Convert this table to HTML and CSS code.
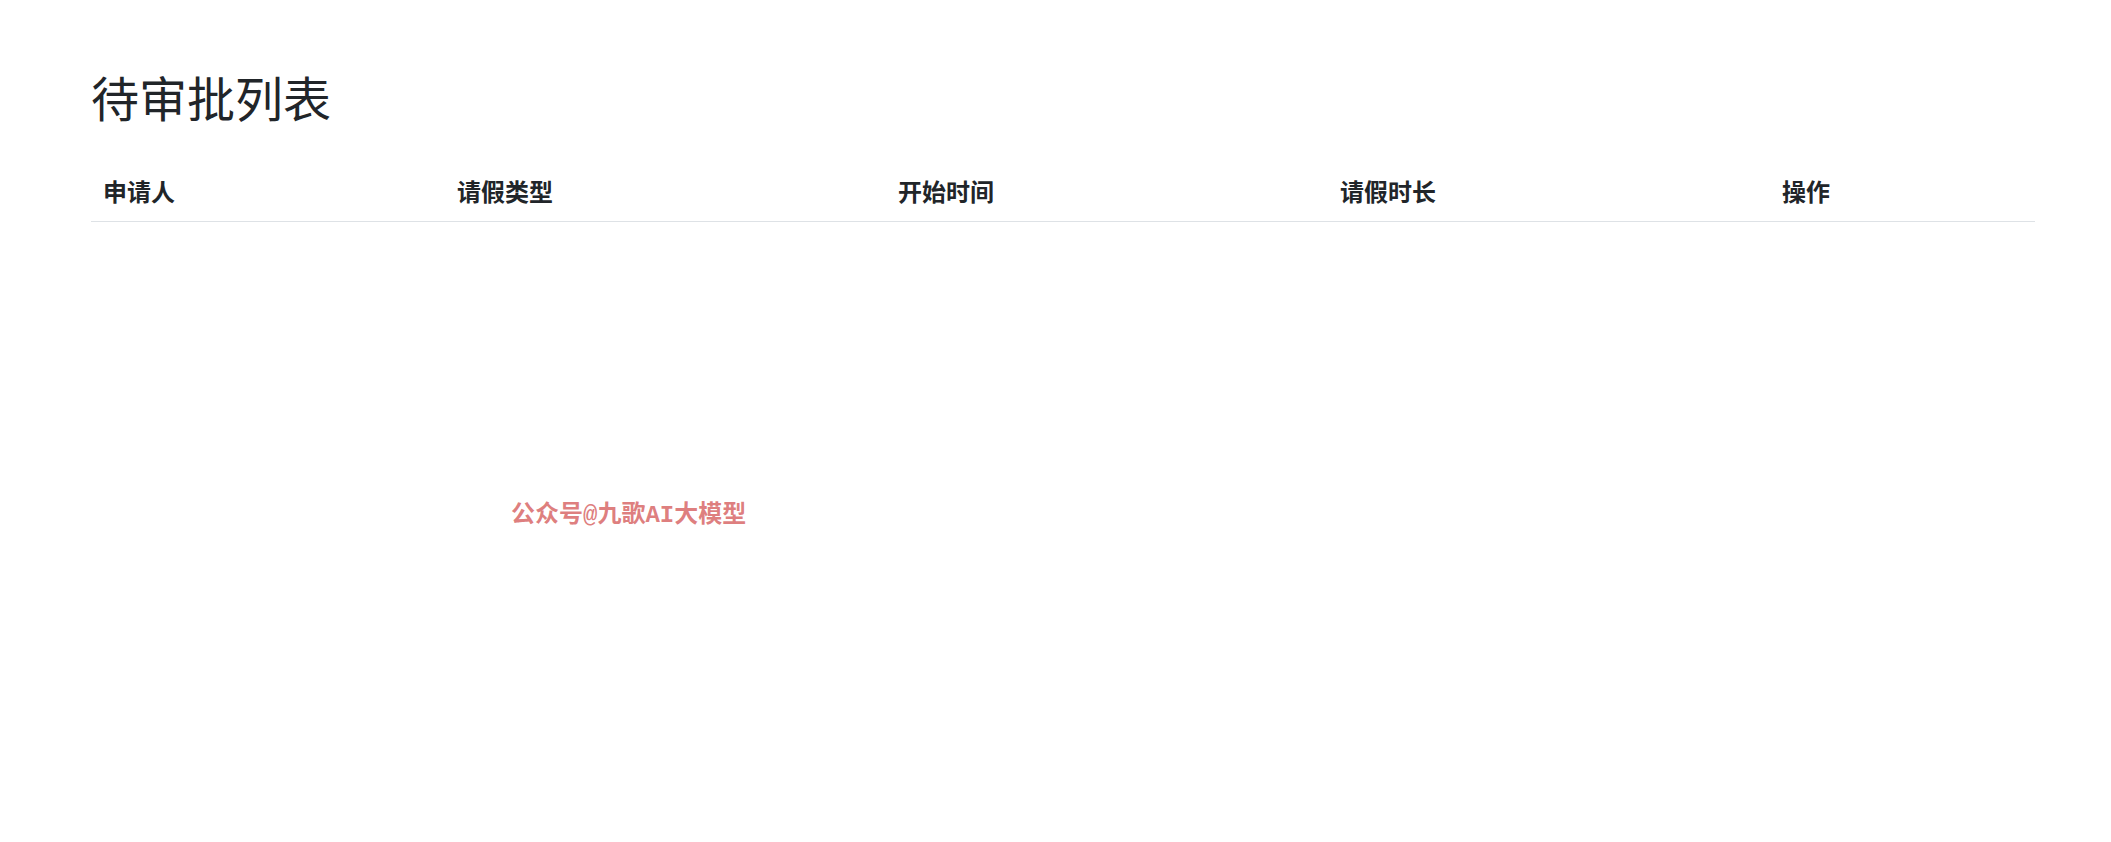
FILE: index.html
```html
<!DOCTYPE html>
<html lang="zh-CN">
<head>
    <meta charset="UTF-8">
    <meta name="viewport" content="width=device-width, initial-scale=1.0">
    <title>待审批列表</title>
    <link rel="stylesheet" href="styles.css">
</head>
<body>
    <div class="container">
        <h1>待审批列表</h1>
        <table class="table">
            <thead>
                <tr>
                    <th class="col-name">申请人</th>
                    <th class="col-type">请假类型</th>
                    <th class="col-start">开始时间</th>
                    <th class="col-days">请假时长</th>
                    <th>操作</th>
                </tr>
            </thead>
            <tbody id="pending-list"></tbody>
        </table>
    </div>
    <div class="watermark">公众号@九歌AI大模型</div>
</body>
</html>
```

FILE: styles.css
```css
body {
    font-family: "Noto Sans CJK SC", "Noto Sans", sans-serif;
    background-color: #fff;
    margin: 0;
    color: #212529;
}
.container {
    padding: 68px 76px 0 91px;
}
h1 {
    font-size: 48px;
    font-weight: 400;
    line-height: 1.2;
    margin: 0 0 35px;
}
.table {
    width: 100%;
    border-collapse: collapse;
    table-layout: fixed;
}
.table th {
    box-sizing: border-box;
    text-align: left;
    font-size: 24px;
    font-weight: 700;
    line-height: 36px;
    padding: 12px;
    border-bottom: 1px solid #dee2e6;
}
.col-name { width: 354px; }
.col-type { width: 441px; }
.col-start { width: 442px; }
.col-days { width: 442px; }
.watermark {
    position: absolute;
    left: 511px;
    top: 504px;
    font-family: "Liberation Mono", "Noto Sans CJK SC", monospace;
    font-size: 24px;
    font-weight: 700;
    line-height: 1;
    color: rgba(200, 40, 40, 0.6);
}
```
